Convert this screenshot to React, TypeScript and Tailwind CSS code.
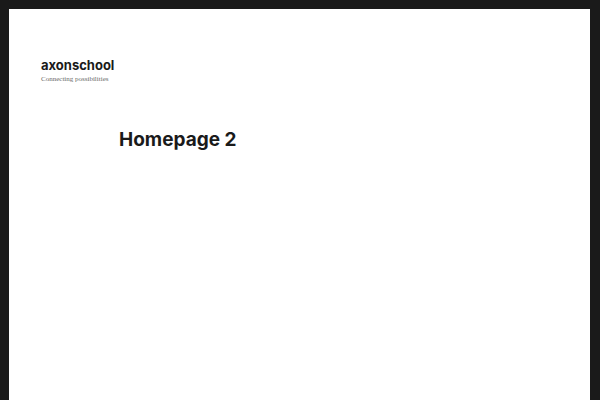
export default function App() {
  return (
    <div className="w-[600px] h-[400px] bg-[#1a1a1a] pt-[9px] pl-[9px] pr-[10px] overflow-hidden">
      <div className="bg-white h-full">
        <header className="pt-[48px] pl-[32px]">
          <p className="font-['Inter',sans-serif] font-bold text-[13px] leading-[16px] text-[#1a1a1a]">axonschool</p>
          <p className="font-['Liberation_Serif',serif] text-[7px] leading-[10px] text-[#686868] mt-[1px]">Connecting possibilities</p>
        </header>
        <main className="pl-[110px] pt-[44px]">
          <h1 className="font-['Inter',sans-serif] font-bold text-[19px] leading-[24px] text-[#1a1a1a]">Homepage 2</h1>
        </main>
      </div>
    </div>
  );
}
